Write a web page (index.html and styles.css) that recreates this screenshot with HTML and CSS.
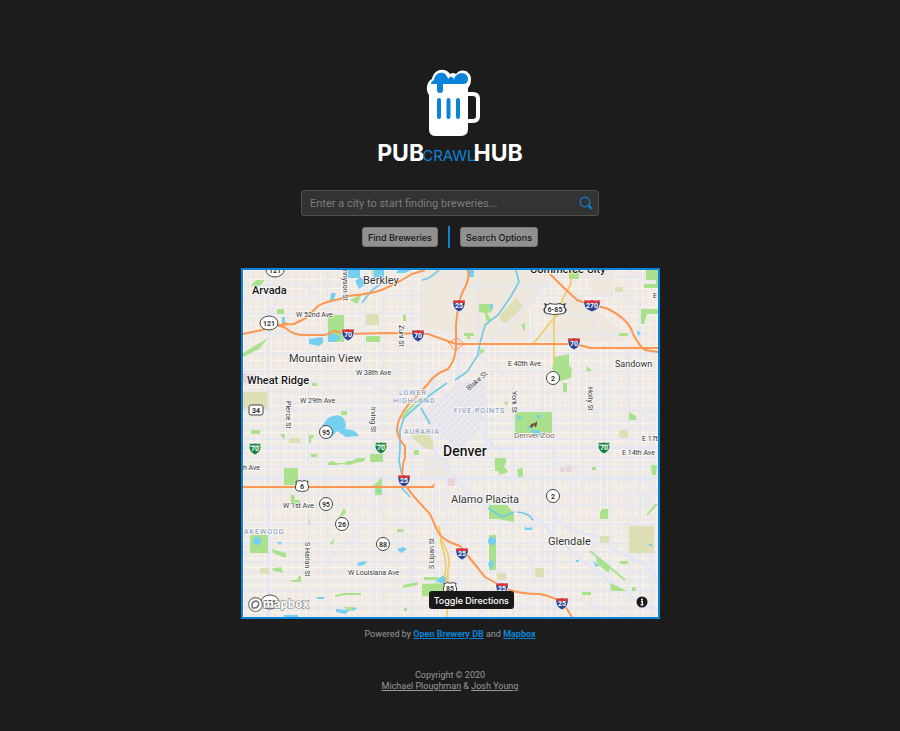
FILE: index.html
```html
<!DOCTYPE html>
<html lang="en">
<head>
<meta charset="utf-8">
<meta name="viewport" content="width=device-width, initial-scale=1">
<title>PubCrawlHub</title>
<link rel="stylesheet" href="styles.css">
</head>
<body>
<header class="brand">
  <svg class="mug" viewBox="0 0 56 70" aria-hidden="true">
    <path d="M39 26h8q5 0 5 5v17q0 5-5 5h-8" fill="none" stroke="#fff" stroke-width="4"/>
    <path d="M3 27C-1 22 1 13 6 11C8 1 19-1 24 6Q27 4 30 6C35-1 45 3 45 11Q45 17 42 20V61Q42 68 35 68H9Q3 68 3 61Z" fill="#fff"/>
    <path d="M5 16Q5 13 8 12C9 3 20 2 22 11Q25 6 28 11C31 3 42 4 42 11Q42 16 37 16H17V22Q17 25 14 25Q11 25 11 22V16Z" fill="#0a84d8"/>
    <path d="M13 32v17M22.500 32v17M32 32v17" stroke="#0a84d8" stroke-width="4" stroke-linecap="round"/>
  </svg>
  <h1 class="wordmark"><span>PUB</span><span class="crawl">CRAWL</span><span>HUB</span></h1>
</header>
<main>
  <form class="search">
    <div class="field">
      <input type="text" aria-label="City" placeholder="Enter a city to start finding breweries...">
      <svg class="lens" viewBox="0 0 14 14" aria-hidden="true"><circle cx="6" cy="6" r="4.800"/><path d="M9.500 9.500l3.500 3.500" stroke-width="2"/></svg>
    </div>
    <div class="actions">
      <button type="button">Find Breweries</button>
      <span class="divider"></span>
      <button type="button">Search Options</button>
    </div>
  </form>
  <section class="map" aria-label="Map of Denver">
    <svg class="tiles" viewBox="243 270 415 347">
      <defs>
        <pattern id="blocks" x="243" y="270" width="7" height="9" patternUnits="userSpaceOnUse"><path d="M0 .5H7M.5 0V9" stroke="#fdfcfb" stroke-width="1"/></pattern>
        <pattern id="downtown" width="5" height="4" patternUnits="userSpaceOnUse" patternTransform="rotate(45)"><rect width="5" height="4" fill="#f1ecea"/><path d="M0 1H5M1 0V4" stroke="#dedff0" stroke-width="1.200"/></pattern>
        <g id="interstate"><path d="M-5.500-5Q-3-4 0-5Q3-4 5.500-5Q8 3 0 7Q-8 3-5.500-5Z" fill="#2d4494" stroke="#fff" stroke-width=".7"/><path d="M-5.500-5Q-3-4 0-5Q3-4 5.500-5L6-2H-6Z" fill="#dc3636"/></g>
        <g id="business"><path d="M-5.500-5Q-3-4 0-5Q3-4 5.500-5Q8 3 0 7Q-8 3-5.500-5Z" fill="#16843e" stroke="#fff" stroke-width=".7"/><path d="M-6-2H6" stroke="#fff" stroke-width=".8"/></g>
        <path id="usroute" d="M-6-5Q-4-4-3-5.500Q0-4 3-5.500Q4-4 6-5Q5-2 6.500 0Q7 5 3 5Q0 5 0 6Q0 5-3 5Q-7 5-6.500 0Q-5-2-6-5Z" fill="#fff" stroke="#444"/>
        <circle id="state" r="6.500" fill="#fff" stroke="#444"/>
      </defs>
      <rect x="243" y="270" width="415" height="347" fill="#f0eae3"/>
      <rect x="243" y="270" width="415" height="347" fill="url(#blocks)" opacity=".5"/>
      <path fill="#eee8df" d="M422 270H553L528 310 530 340H458V333L422 328ZM555 308L572 290 622 330V342H538ZM424 455h26v25h-26ZM584 270h30v26h-20Z"/>
      <g class="roads">
        <path d="M243 285H340M243 298H320M243 314H421M243 333H460M243 353H658M243 371H658M243 382H440M243 392H658M243 403H460M243 410H658M243 420H658M243 428H658M243 439H658M243 458H658M243 467H658M243 478H658M422 495H658M243 495H400M243 505H658M243 524H658M243 543H658M243 552H658M243 562H658M243 572H658M243 581H658M243 591H658M243 608H658M383 296H421M458 286H555M550 277H658M535 296H628M543 315H594V334M530 334H658"/>
        <path d="M269 270V617M280 380V495M308 330V617M327 270V617M343 270V290M354 380V550M364 270V430M374 400V617M383 270V617M398 333V617M412 270V617M421 270V450M434 455V617M447 455V617M459 270V617M466 440V617M478 270V360M483 450V617M500 450V617M513 380V617M532 310V617M543 365V617M554 355V617M571 360V617M582 350V500M594 350V617M603 380V500M610 335V617M629 270V617M640 300V617M650 400V617"/>
        <path d="M268 330L271 312Q285 288 285 270M303 285L322 298M523 302L504 325 480 354M553 275L535 296 503 333M478 354L505 376M365 382L405 402 432 437M327 562L366 525M243 600Q260 604 269 617M555 463Q575 465 585 477M630 270L642 280H658M554 600H580L629 617M477 617L490 599 530 606M405 524Q399 550 410 563L412 582M635 425Q642 410 657 412M635 490l10-10 13 10-11 15ZM636 485l15 18"/>
      </g>
      <path class="arterial" d="M243 448H658M243 478H400M420 478H658M432 370V448M269 495V617M554 450V617M459 350V450M629 350V420M432 448L475 502M517 512Q535 512 550 532L585 563 640 602 658 610M553 514Q563 530 592 535L620 552 644 564 658 579"/>
      <path class="roads" d="M593 550L612 570M629 500L637 525 652 542V617M517 547Q533 557 533 572"/>
      <path fill="#dfdfb6" d="M243 392h25v17h-25ZM629 526h25v27h-25ZM500 315l16-17 7 9-17 16-5-2ZM411 436l14-5 8 10v9l-8-2-10-7ZM366 314h13v11h-13ZM290 438h10v5h-12ZM260 568h9v6h-9ZM535 568h9v9h-9ZM600 536h9v7h-9ZM619 430h9v8h-9ZM615 287h8v5h-8ZM497 573h9v7h-9ZM371 270h13v5h-13Z"/>
      <path fill="#ead4da" d="M560 467h5v5h-5ZM566 466h6v6h-6ZM448 478h7v8h-7ZM243 374h12v9h-12Z"/>
      <path fill="#a9e18d" d="M256 280h9l-5 6h-9ZM277 309h7v5h-7ZM328 315h16v27h-16ZM243 353l25-15-9 11-16 8ZM350 300l12-6-5 10ZM366 336h14v6h-14ZM479 304h13v8l-5 1 5 8h-6l-1-8-6-1ZM464 333h10v3h-4v3h-3v-3h-3ZM403 315h3v6h-3ZM481 348l4 3-6 4ZM569 270h10v9h-10ZM646 270h12v18h-14v-4h12v-4h-10ZM641 309h17v5h-11l-3 10h-3ZM555 357l14-3v12l3 2-1 10-14 4v-9l-5-4ZM586 366l6 4-5 2ZM525 332l-4-7 4-2ZM620 333h8v3h-10ZM341 411h6v4h-6ZM251 430h9v4h-9ZM284 468h14v17h-14ZM328 463l4-2 5 2h7l4-2h4l6-3v4l-9 3-7-1-5 1h-9ZM358 458h8l-3 4h-5ZM309 435h5l-1 3-2 1v4h-2ZM280 434h5l-1 6ZM370 454h13v8h-13ZM371 488l11-11v11ZM375 488h7v7h-7ZM311 454h6v3h-6ZM312 383h5v3h-5ZM250 535h18v18h-18ZM286 503h5v-8h3l1 5h5v4h-14ZM308 515l2 8-1 3ZM344 508l2 5-8 6ZM271 569l10-2 2 6-8-2ZM330 543l5-5-2 7ZM272 549l14 4v5l-13-5ZM291 580h6l2-4h2v6h-9ZM397 529h6v3h-6ZM515 412h37v21h-37ZM629 412l7 4v4h-7ZM497 458h9v5l-2 3 4 6-8 3-2-4h-3v-13ZM414 450h5v5h-5ZM504 402h5l-3 4ZM592 467h4v3h-4ZM517 469l6-1v9h-5ZM651 465h6l-1 10h-4ZM489 505h18l7 9v8l-17-3h-8ZM489 535h7v35h-7ZM422 584l22-1v13h-22ZM495 592h7v4h-7ZM403 585l15-3v3l-15 3ZM424 577h15v3h-15ZM602 509h6v10h-8v-7ZM578 540h7v5h-7ZM596 557l13 8v8l-12-9ZM610 583l17 8h-16ZM620 561h8v3h-8ZM582 592h9v3h-9ZM632 587h4v4h-4ZM655 504h3l-10 11h-2ZM344 607h11l-2 4-7-2ZM563 383h4v9h-4ZM404 608h3v3h-3Z"/>
      <g fill="#75cfef"><path d="M328 418q7-4 13-2 7 6 4 13 10 0 14 7l-13 1-9-6-6 7h-5l-4-12ZM309 339l13-2q4 5-3 9l-10-2ZM328 334h8l5 4-6 4h-7ZM348 270h12v8h-12ZM374 270h10v8h-11ZM355 281l6-4 5 7-7 5ZM331 293h5l-2 7h-4ZM282 317h3v7h-3ZM469 270h5v7h-5ZM490 304h3v5h-3ZM398 270h13l-6 3h-9Z"/><circle cx="257" cy="541" r="4"/><circle cx="492" cy="541" r="4"/><path d="M489 562q5-4 5 1l-3 6-3-4ZM359 562l8-1-3 4-7 1ZM277 542h5l-2 3ZM397 549l6-2 4 2-6 4ZM435 582l8-7 4 5-3 3ZM336 609l14 1-5 4-9-2ZM284 615h14v2h-14ZM317 597h7v2h-7ZM352 608h5l-3 3ZM517 415l6 3-5 2ZM530 430l9 0 4 7-9-2ZM527 425l4 2-3 3ZM537 415h4v3h-4ZM637 330l4 3-3 3ZM377 490l4 0-2 3ZM593 561l6 5-3 1ZM576 560h3v2h-3ZM649 544h3v2h-3ZM524 527l4 1 4-1v3h-7Z"/></g>
      <path d="M459 383L485 375 486 400 480 430 459 449 435 433 421 415 447 391Z" fill="url(#downtown)"/>
      <path d="M486 398V448M459 449H515M481 431L495 448" class="arterial"/>
      <path class="river" d="M516 270L519 282 510 298 498 315 485 325 480 343 478 355 467 372 455 380M447 383L430 395 415 408 404 418 400 430V450L399 461 402 475V488L410 497M421 408L430 424M439 270Q428 280 422 280M383 282L371 291 362 303M488 508L502 517 514 512M517 512Q529 513 533 520"/>
      <path class="greenway" d="M421 398L405 413M335 596L344 594 361 594M520 413L532 415M590 551L625 580M412 406L402 418"/>
      <g class="yellow"><path d="M571 270V284L562 300 560 312 548 325 534 343M554 315V363M439 526L441 540Q452 556 448 570L447 617M440 540Q448 562 445 575L450 590"/></g>
      <g class="highway">
        <path d="M243 334L262 330 278 325 294 324 306 318 318 306Q327 301 340 299L347 296Q374 294 386 288L400 281 412 274 425 270M278 326Q284 326 288 330 294 335 305 335H323Q328 335 333 331 339 332 348 334L386 333 428 334 456 344H570Q578 344 590 348H658M468 270Q470 280 463 291 458 302 456 325V348Q455 361 448 369 434 374 428 384L408 405Q397 419 397 430 398 439 405 446V457Q401 468 403 481 408 490 417 500L430 514 438 532Q443 541 460 546L485 577 503 587Q515 594 540 594 559 598 565 606L572 617M243 487H433L434 484M550 274L562 286 577 300 590 305 606 308Q629 319 633 334 640 347 645 350L658 352M278 326L287 323"/>
        <path class="ramps" d="M455 339l-7 4M456 350l8-6-8-7M447 340l8 11"/>
      </g>
      <g class="major">
        <text x="252" y="294">Arvada</text><text x="247" y="384">Wheat Ridge</text><text x="530" y="273">Commerce City</text><text class="capital" x="443" y="456">Denver</text>
      </g>
      <g class="towns">
        <text x="363" y="284">Berkley</text><text x="289" y="362">Mountain View</text><text x="451" y="503">Alamo Placita</text><text x="548" y="545">Glendale</text>
        <text class="smalltown" x="615" y="367">Sandown</text>
      </g>
      <g class="districts"><text x="399" y="395">LOWER</text><text x="393" y="403">HIGHLAND</text><text x="404" y="434">AURARIA</text><text x="454" y="413">FIVE POINTS</text><text x="244" y="534">AKEWOOD</text></g>
      <g class="streets">
        <text x="296" y="317">W 52nd Ave</text><text x="356" y="375">W 38th Ave</text><text x="300" y="403">W 29th Ave</text><text x="508" y="366">E 40th Ave</text><text x="622" y="455">E 14th Ave</text><text x="642" y="441">E 17th</text><text x="243" y="470">h Ave</text><text x="283" y="508">W 1st Ave</text><text x="348" y="575">W Louisiana Ave</text><text x="653" y="298">E</text>
        <text transform="translate(343 270) rotate(90)">nnyson St</text><text transform="translate(399 325) rotate(90)">Zuni St</text><text transform="translate(286 401) rotate(90)">Pierce St</text><text transform="translate(371 407) rotate(90)">Irving St</text><text transform="translate(512 391) rotate(90)">York St</text><text transform="translate(588 387) rotate(90)">Holly St</text><text transform="translate(305 542) rotate(90)">S Harlan St</text><text transform="translate(434 569) rotate(-90)">S Lipan St</text><text transform="translate(469 391) rotate(-42)">Blake St</text>
      </g>
      <path d="M530 427l1-3 4-1 2-2v3l-1 3h-1l-1-2-2 3Z" fill="#74513a"/><text class="zoo" x="514" y="438">Denver Zoo</text>
      <g><use href="#interstate" x="348" y="334"/><use href="#interstate" x="418" y="335"/><use href="#interstate" x="459" y="305"/><use href="#interstate" x="574" y="343"/><use href="#interstate" x="404" y="480"/><use href="#interstate" x="462" y="553"/><use href="#interstate" x="502" y="588"/><use href="#interstate" x="562" y="603"/><use href="#interstate" transform="translate(592 305) scale(1.350 1)"/><use href="#business" x="255" y="448"/><use href="#business" x="381" y="447"/><use href="#business" x="604" y="447"/></g>
      <g class="shield-text"><text x="348" y="337">70</text><text x="418" y="338">70</text><text x="459" y="308">25</text><text x="574" y="346">70</text><text x="404" y="483">25</text><text x="462" y="556">25</text><text x="502" y="591">25</text><text x="562" y="606">25</text><text x="592" y="308">270</text><text x="255" y="451">70</text><text x="381" y="450">70</text><text x="604" y="450">70</text></g>
      <g><use href="#state" x="326" y="432"/><use href="#state" x="553" y="378"/><use href="#state" x="553" y="496"/><use href="#state" x="326" y="504"/><use href="#state" x="342" y="524"/><use href="#state" x="383" y="544"/><ellipse cx="269" cy="323" rx="9" ry="7" fill="#fff" stroke="#444"/><ellipse cx="275" cy="270" rx="9" ry="7" fill="#fff" stroke="#444"/><ellipse cx="270" cy="602" rx="9" ry="7" fill="#fff" stroke="#444"/><use href="#usroute" x="302" y="486"/><use href="#usroute" x="450" y="588"/><use href="#usroute" transform="translate(555 309) scale(1.650 1)"/><rect x="249" y="405" width="14" height="10" rx="2" fill="#fff" stroke="#444"/></g>
      <g class="route-text"><text x="326" y="435">95</text><text x="553" y="381">2</text><text x="553" y="499">2</text><text x="326" y="507">95</text><text x="342" y="527">26</text><text x="383" y="547">88</text><text x="269" y="326">121</text><text x="275" y="273">121</text><text x="270" y="605">121</text><text x="302" y="489">6</text><text x="450" y="591">85</text><text x="555" y="312">6-85</text><text x="256" y="413">34</text></g>
    </svg>
    <a class="mapbox" href="#mapbox" aria-label="Mapbox logo">
      <svg viewBox="0 0 60 16"><circle cx="8" cy="8" r="6.500" fill="#fff" fill-opacity=".85" stroke="#777"/><path d="M5 11Q4 6 7 5Q11 4 11 8Q10 12 5 11Z" fill="#fff" stroke="#777" stroke-width="1.500"/><text x="15" y="11">mapbox</text></svg>
    </a>
    <button class="directions" type="button">Toggle Directions</button>
    <button class="info" type="button" aria-label="Map information"><svg viewBox="0 0 12 12"><circle cx="6" cy="6" r="5.500" fill="#191919"/><circle cx="6" cy="3.500" r="1" fill="#fff"/><path d="M5 5.500h1.300V8.500M4.500 8.800h3" fill="none" stroke="#fff" stroke-width="1.300"/></svg></button>
  </section>
  <p class="powered">Powered by <a href="#brewery">Open Brewery DB</a> and <a href="#mapbox">Mapbox</a></p>
</main>
<footer>Copyright © 2020<br><a href="#michael">Michael Ploughman</a> &amp; <a href="#josh">Josh Young</a></footer>
</body>
</html>
```
FILE: styles.css
```css
* { box-sizing: border-box; }
body {
  margin: 0;
  padding: 68px 16px 38px;
  background: #1c1c1c;
  color: #999;
  font: 9px/11px Roboto, sans-serif;
  text-align: center;
}
.brand { display: flex; flex-direction: column; align-items: center; }
.mug { width: 56px; height: 70px; margin-left: 8px; }
.wordmark {
  display: flex;
  align-items: baseline;
  margin: 3px 0 0;
  color: #fff;
  font: 700 23px/24px Inter, sans-serif;
}
.crawl { margin: 0 -2px; color: #0a84d8; font-size: 15px; font-weight: 400; }
.search { width: 100%; max-width: 298px; margin: 22px auto 0; }
.field { position: relative; }
.field input {
  display: block;
  width: 100%;
  height: 26px;
  padding: 0 28px 0 8px;
  border: 1px solid #505050;
  border-radius: 3px;
  background: #333;
  color: #ccc;
  font: 11px Roboto, sans-serif;
}
.field input::placeholder { color: #7d7d7d; opacity: 1; }
.lens {
  position: absolute;
  top: 6px;
  right: 6px;
  width: 14px;
  height: 14px;
  fill: none;
  stroke: #0a84d8;
  stroke-width: 1.2;
}
.actions { display: flex; justify-content: center; align-items: center; gap: 10px; margin-top: 10px; }
.actions button {
  height: 20px;
  padding: 0 5px;
  border: 1px solid #757575;
  border-radius: 3px;
  background: #909090;
  color: #161616;
  font: 500 9px Inter, sans-serif;
}
.divider { width: 2px; height: 22px; background: #0a84d8; }
.map {
  position: relative;
  width: 100%;
  max-width: 419px;
  margin: 20px auto 0;
  border: 2px solid #0a84d8;
}
.tiles { display: block; width: 100%; height: auto; font-family: Roboto, sans-serif; }
.roads, .arterial, .river, .greenway, .yellow, .highway { fill: none; }
.roads { stroke: #e4e6f3; stroke-width: 1.5; }
.arterial { stroke: #e3e6f6; stroke-width: 2.6; }
.river { stroke: #72cbe5; stroke-width: 1.7; }
.greenway { stroke: #a9e18d; stroke-width: 2; }
.yellow { stroke: #f3ca61; stroke-width: 1.6; }
.highway { stroke: #fd9751; stroke-width: 2; stroke-linejoin: round; }
.highway .ramps { stroke-width: 1; }
.major, .towns, .streets, .districts, .zoo { paint-order: stroke; stroke: #fff; stroke-opacity: .85; stroke-width: 1.5px; }
.major { fill: #151515; font-size: 11px; font-weight: 500; }
.major .capital { font-size: 14px; }
.towns { fill: #333; font-size: 11px; }
.towns .smalltown { font-size: 9px; }
.streets { fill: #333; font-size: 7px; }
.districts { fill: #7785b0; font-size: 7px; letter-spacing: 1px; }
.zoo { fill: #80634e; font-size: 8px; }
.shield-text, .route-text { font-size: 7px; font-weight: 700; text-anchor: middle; }
.shield-text { fill: #fff; }
.route-text { fill: #333; }
.mapbox { position: absolute; left: 4px; bottom: 4px; width: 64px; height: 17px; }
.mapbox svg { display: block; }
.mapbox text { font: 700 11px Inter, sans-serif; fill: #fff; stroke: #777; stroke-width: 1px; paint-order: stroke; }
.directions {
  position: absolute;
  right: 34.6%;
  bottom: 8px;
  height: 18px;
  padding: 0 5px;
  border: 0;
  border-radius: 3px;
  background: #191919;
  color: #fff;
  font: 500 9px Inter, sans-serif;
}
.info { position: absolute; right: 10px; bottom: 9px; width: 12px; height: 12px; padding: 0; border: 0; background: none; }
.info svg { display: block; }
.powered { margin: 10px 0 30px; }
.powered a { color: #0a84d8; font-weight: 700; }
footer a { color: inherit; }
```
